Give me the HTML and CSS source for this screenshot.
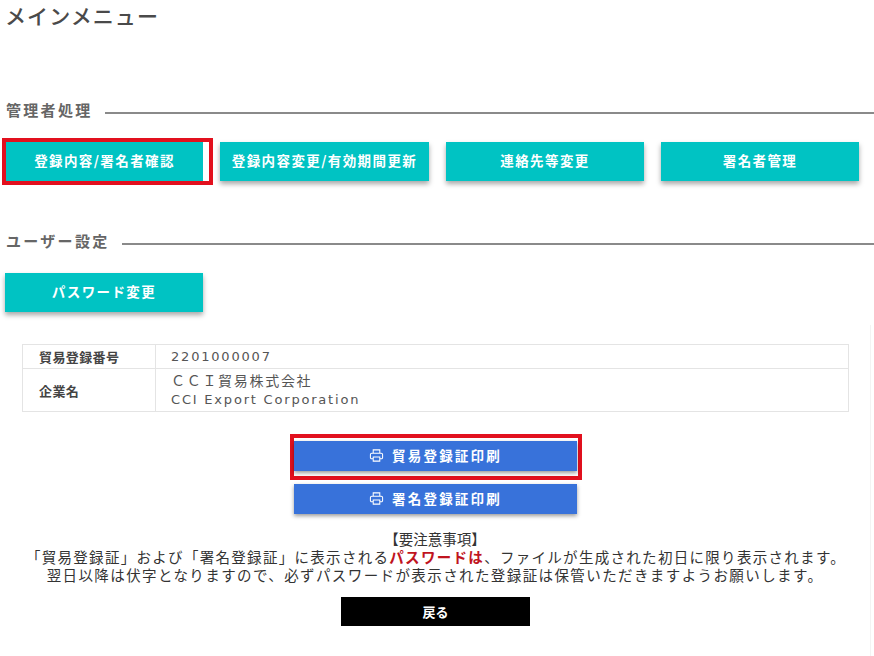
FILE: index.html
```html
<!DOCTYPE html>
<html lang="ja">
<head>
<meta charset="utf-8">
<title>メインメニュー</title>
<link rel="stylesheet" href="styles.css">
</head>
<body>
<h1 class="title">メインメニュー</h1>

<section class="group group-admin">
  <h2 class="heading"><span>管理者処理</span><i class="rule"></i></h2>
  <div class="btn-row">
    <div class="mark mark-first"><a class="btn">登録内容/署名者確認</a></div>
    <a class="btn btn-wide">登録内容変更/有効期間更新</a>
    <a class="btn">連絡先等変更</a>
    <a class="btn">署名者管理</a>
  </div>
</section>

<section class="group group-user">
  <h2 class="heading"><span>ユーザー設定</span><i class="rule"></i></h2>
  <div class="btn-row btn-row-user">
    <a class="btn">パスワード変更</a>
  </div>
</section>

<main class="panel">
  <table class="info">
    <tr class="row-number"><th>貿易登録番号</th><td>2201000007</td></tr>
    <tr class="row-name"><th>企業名</th><td><span class="jp-name">ＣＣＩ貿易株式会社</span><br>CCI Export Corporation</td></tr>
  </table>

  <div class="print-stack">
    <div class="mark mark-print">
      <a class="print-btn">
        <svg class="printer" viewBox="0 0 16 16" aria-hidden="true"><path d="M4.500 5.500V2h7v3.500M4.500 11.500H2.800a1.300 1.300 0 0 1-1.300-1.300V7a1.500 1.500 0 0 1 1.500-1.500h10A1.500 1.500 0 0 1 14.500 7v3.200a1.300 1.300 0 0 1-1.300 1.300h-1.700M4.500 9.500h7V14h-7z"/></svg>
        <span>貿易登録証印刷</span>
      </a>
    </div>
    <a class="print-btn print-btn-second">
      <svg class="printer" viewBox="0 0 16 16" aria-hidden="true"><path d="M4.500 5.500V2h7v3.500M4.500 11.500H2.800a1.300 1.300 0 0 1-1.300-1.300V7a1.500 1.500 0 0 1 1.500-1.500h10A1.500 1.500 0 0 1 14.500 7v3.200a1.300 1.300 0 0 1-1.300 1.300h-1.700M4.500 9.500h7V14h-7z"/></svg>
      <span>署名登録証印刷</span>
    </a>
  </div>

  <div class="notice">
    <p>【要注意事項】</p>
    <p class="notice-long">「貿易登録証」および「署名登録証」に表示される<strong>パスワードは</strong>、ファイルが生成された初日に限り表示されます。</p>
    <p class="notice-short">翌日以降は伏字となりますので、必ずパスワードが表示された登録証は保管いただきますようお願いします。</p>
  </div>

  <a class="back">戻る</a>
</main>
</body>
</html>
```
FILE: styles.css
```css
* { box-sizing: border-box; }
html, body { margin: 0; padding: 0; }
body {
  width: 874px;
  height: 656px;
  overflow: hidden;
  background: #fff;
  color: #444;
  font-family: "Noto Sans CJK JP", "Noto Sans", sans-serif;
}
.title {
  margin: 0;
  padding: 1px 0 0 5px;
  height: 30px;
  font-size: 21px;
  line-height: 28px;
  font-weight: 500;
  letter-spacing: 1.100px;
  color: #4a4a4a;
}
.group-admin { padding-top: 69px; }
.group-user { padding-top: 49px; }
.heading {
  display: flex;
  align-items: center;
  margin: 0;
  padding-left: 6px;
  height: 23px;
  font-size: 15px;
  line-height: 22px;
  font-weight: 700;
  letter-spacing: 2.300px;
  color: #666;
}
.heading span { margin-top: -1px; }
.rule {
  flex: 1;
  height: 2px;
  margin: 4px 0 0 12px;
  background: #8a8a8a;
}
.btn-row {
  display: flex;
  gap: 17px;
  padding: 20px 0 0 6px;
}
.btn-row-user { padding: 20px 0 0 5px; }
.btn {
  display: flex;
  align-items: center;
  justify-content: center;
  width: 198px;
  height: 39px;
  padding-bottom: 3px;
  background: #00c3c3;
  color: #fff;
  font-size: 13.500px;
  font-weight: 700;
  letter-spacing: 1.400px;
  box-shadow: 0 3px 5px rgba(0, 0, 0, .35);
}
.btn-wide { width: 209px; }
.mark { border: 4px solid #e2101e; background: #fff; }
.mark-first {
  width: 211px;
  height: 47px;
  margin: -4px -10px -4px -4px;
}
.mark-first .btn { box-shadow: none; width: 197px; }
.panel {
  margin: 13px 3px 0 0;
  height: 331px;
  border-right: 1px solid #f3f3f3;
  padding-top: 19px;
}
.info {
  width: 827px;
  margin-left: 22px;
  border-collapse: collapse;
  font-size: 13px;
}
.info th, .info td { border: 1px solid #e4e4e4; padding: 0; }
.info th {
  width: 133px;
  padding-left: 16px;
  text-align: left;
  font-size: 13px;
  font-weight: 700;
  letter-spacing: .4px;
  color: #444;
}
.info td {
  padding-left: 15px;
  font-family: "DejaVu Sans", "Noto Sans CJK JP", sans-serif;
  font-size: 13px;
  line-height: 18px;
  letter-spacing: 1.800px;
  color: #555;
}
.jp-name { font-size: 14px; letter-spacing: 1.700px; }
.row-number { height: 24px; }
.row-name { height: 43px; }
.print-stack {
  display: flex;
  flex-direction: column;
  align-items: center;
  padding-top: 22px;
  width: 871px;
}
.mark-print {
  width: 292px;
  height: 46px;
  padding-top: 3px;
  display: flex;
  justify-content: center;
}
.print-btn {
  display: flex;
  align-items: center;
  justify-content: center;
  gap: 8px;
  width: 283px;
  height: 30px;
  padding-bottom: 2px;
  background: #3872da;
  color: #fff;
  font-size: 13.500px;
  font-weight: 700;
  letter-spacing: 2.200px;
  box-shadow: 0 2px 4px rgba(0, 0, 0, .4);
}
.print-btn-second { margin-top: 4px; }
.printer {
  width: 15px;
  height: 15px;
  fill: none;
  stroke: #fff;
  stroke-width: 1.100;
}
.notice {
  padding-top: 16px;
  text-align: center;
  font-size: 14.500px;
  line-height: 18px;
  color: #333;
}
.notice p { margin: 0; white-space: nowrap; }
.notice .notice-long { letter-spacing: 1.300px; padding-left: 2px; }
.notice .notice-short { letter-spacing: 1.400px; }
.notice strong { color: #c0141e; font-weight: 700; }
.back {
  display: flex;
  align-items: center;
  justify-content: center;
  width: 189px;
  height: 29px;
  margin: 13px 0 0 341px;
  background: #000;
  color: #fff;
  font-size: 13px;
  font-weight: 700;
}
```
